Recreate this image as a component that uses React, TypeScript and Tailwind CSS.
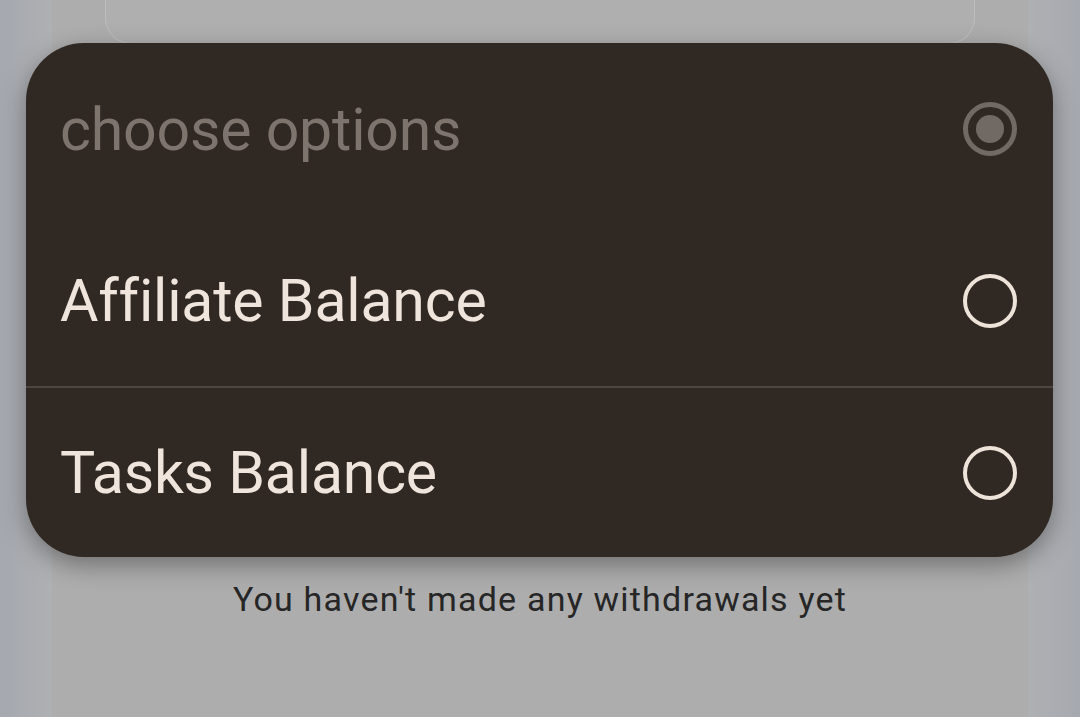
import React from "react";

const Radio = ({ selected = false }: { selected?: boolean }) => {
  if (selected) {
    return (
      <span className="flex size-[54px] items-center justify-center rounded-full border-[5px] border-[#716964]">
        <span className="size-[28px] rounded-full bg-[#716964]" />
      </span>
    );
  }
  return <span className="size-[54px] rounded-full border-[4px] border-[#eee3d9]" />;
};

const Option = ({ label, divider }: { label: string; divider?: boolean }) => (
  <div
    className={`flex h-[171px] items-center justify-between pl-[34px] pr-[36px] ${
      divider ? "border-t-2 border-[#4d4540]" : ""
    }`}
  >
    <span className="text-[59px] leading-none tracking-[-0.2px] text-[#efe5dc]">{label}</span>
    <Radio />
  </div>
);

export default function App() {
  return (
    <div
      className="relative h-[717px] w-[1080px] overflow-hidden bg-[#a9acb2]"
      style={{ fontFamily: "Roboto, 'Liberation Sans', sans-serif" }}
    >
      <div className="flex h-full">
        <div className="w-[52px] bg-gradient-to-r from-[#a4a8af] to-[#afb0b2]" />
        <div className="flex flex-1 flex-col bg-[#adadad]">
          <div className="mx-[53px] h-[44px] rounded-b-[26px] border border-t-0 border-[#bdbdbd] bg-[#afafaf]" />
          <div className="mt-[530px] text-center text-[34px] tracking-[1.2px] text-[#262626]">
            You haven't made any withdrawals yet
          </div>
        </div>
        <div className="w-[52px] bg-gradient-to-r from-[#aeb0b3] to-[#a6a9af]" />
      </div>

      <div className="absolute left-[26px] top-[43px] w-[1027px] overflow-hidden rounded-[58px] bg-[#302923] shadow-[0_8px_24px_rgba(0,0,0,0.35)]">
        <div className="flex h-[172px] items-center justify-between pl-[34px] pr-[36px]">
          <span className="text-[59px] leading-none tracking-[-0.2px] text-[#7d746e]">choose options</span>
          <Radio selected />
        </div>
        <Option label="Affiliate Balance" />
        <Option label="Tasks Balance" divider />
      </div>
    </div>
  );
}
